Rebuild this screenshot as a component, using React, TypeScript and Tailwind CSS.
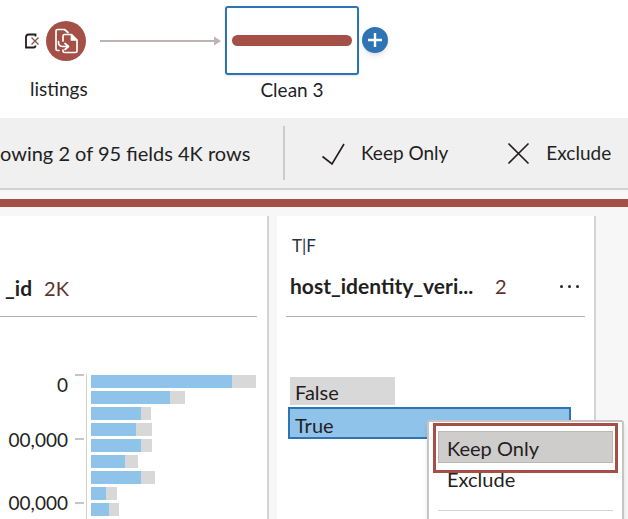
import React from "react";

type Bar = { selected: number; total: number };

const bars: Bar[] = [
  { selected: 141, total: 165 },
  { selected: 79, total: 94 },
  { selected: 50, total: 60 },
  { selected: 45, total: 61 },
  { selected: 50, total: 61 },
  { selected: 34, total: 47 },
  { selected: 50, total: 64 },
  { selected: 15, total: 26 },
  { selected: 18, total: 28 },
];

const axisLabels = ["0", "00,000", "00,000"];

function InputIcon() {
  return (
    <svg viewBox="0 0 16 16" className="h-4 w-4" fill="none" stroke="#241c1c" strokeWidth="1.8" aria-hidden="true">
      <path d="M11.500 3.500V1.500H4.500C2.500 1.500 2 2.500 2 4.500V14.500H9.500C10.500 14.500 11.500 13.500 11.500 12.500" />
      <path d="M7.500 4.500L14.500 11.500M14.500 4.500L7.500 11.500" stroke="#85504c" strokeWidth="1.3" />
    </svg>
  );
}

function ListingsIcon() {
  return (
    <svg viewBox="0 0 40 40" className="h-10 w-10" fill="none" aria-hidden="true">
      <circle cx="20" cy="20" r="20" fill="#a45047" />
      <g stroke="#fff" strokeWidth="1.7" strokeLinejoin="round" strokeLinecap="round">
        <path d="M13 29.500H11.500Q10 29.500 10 28V10Q10 8.500 11.500 8.500H18.500L22 11.500" />
        <path d="M17 20V15Q17 13.500 18.500 13.500H25.500L31 19V30Q31 31.500 29.500 31.500H18.500Q17 31.500 17 30V29" />
        <path d="M25.500 14V19H30.500" fill="#fff" />
        <path d="M12.500 20.500Q12 25.500 17 25.500H22M19 22.500L22.500 25.500L19 28.500" />
      </g>
    </svg>
  );
}

function FlowPane() {
  return (
    <section aria-label="Flow" className="flex h-[118px] min-w-0 items-start">
      <div className="flex w-[100px] shrink-0 flex-col pt-[21px]">
        <div className="flex items-center gap-[6px] pl-6">
          <InputIcon />
          <ListingsIcon />
        </div>
        <span className="mt-4 pl-[30px] text-[19px] leading-6">listings</span>
      </div>
      <div className="mt-9 mr-1 flex w-[121px] items-center">
        <div className="h-[2px] flex-1 bg-[#bdb3b3]" />
        <svg viewBox="0 0 7 10" className="h-[10px] w-[7px]" aria-hidden="true">
          <path d="M0 0.500L7 5L0 9.500Z" fill="#bdb3b3" />
        </svg>
      </div>
      <div className="flex w-[134px] shrink-0 flex-col items-center pt-[6px]">
        <div className="flex h-[69px] w-full items-center rounded-[3px] border-2 border-[#2e74b5] px-[5px] shadow-sm">
          <div className="h-[11px] w-full rounded-full bg-[#a45047]" />
        </div>
        <span className="mt-[3px] text-[19px] leading-6">Clean 3</span>
      </div>
      <button type="button" aria-label="Add step" className="mt-[27px] ml-[3px] flex size-[26px] shrink-0 items-center justify-center rounded-full bg-[#2e74b5] shadow-md">
        <svg viewBox="0 0 16 16" className="size-4" stroke="#fff" strokeWidth="2.4" aria-hidden="true">
          <path d="M8 1V15M1 8H15" />
        </svg>
      </button>
    </section>
  );
}

function Toolbar() {
  return (
    <section aria-label="Profile toolbar" className="flex h-[72px] shrink-0 items-center border-b-2 border-[#d2d2d2] bg-[#f0f0f0] text-[19px]">
      <span className="w-[283px] shrink-0 text-[20px] whitespace-nowrap">owing 2 of 95 fields 4K rows</span>
      <div className="h-[54px] w-[2px] bg-[#cccccc]" />
      <button type="button" className="ml-9 flex items-center gap-4 whitespace-nowrap">
        <svg viewBox="0 0 24 24" className="h-6 w-6" fill="none" stroke="#241c1c" strokeWidth="1.6" aria-hidden="true">
          <path d="M1.500 15.500L11 23L23 3" />
        </svg>
        Keep Only
      </button>
      <button type="button" className="ml-[58px] flex items-center gap-4 whitespace-nowrap">
        <svg viewBox="0 0 24 24" className="h-6 w-6" fill="none" stroke="#241c1c" strokeWidth="1.6" aria-hidden="true">
          <path d="M2.500 2.500L22.500 22.500M22.500 2.500L2.500 22.500" />
        </svg>
        Exclude
      </button>
    </section>
  );
}

function IdCard() {
  return (
    <article className="min-w-0 border-r-2 border-[#d4d4d4] bg-white">
      <header className="mr-[10px] flex h-[101px] items-end gap-3 border-b border-[#b8b0b0] pb-4 pl-[5px] text-[20px] leading-6">
        <h2 className="text-[21px] font-bold">_id</h2>
        <span className="text-[#5c3330]">2K</span>
      </header>
      <div className="flex items-start pt-12">
        <div className="flex w-[68px] shrink-0 flex-col gap-[39px] text-right text-[19px] leading-6">
          {axisLabels.map((label, i) => (
            <span key={i} className="h-6 first:pt-2">{label}</span>
          ))}
        </div>
        <div className="mt-[9px] ml-[7px] flex w-[11px] flex-col gap-[62px]">
          {axisLabels.map((_, i) => (
            <i key={i} className="h-[2px] w-[9px] bg-[#c9c4c4]" />
          ))}
        </div>
        <div className="mt-[9px] flex flex-col gap-[3px] border-l border-[#d2d2d2] pt-px pb-4 pl-1">
          {bars.map((bar, i) => (
            <div key={i} className="h-[13px] bg-[#d8d8d8]" style={{ width: bar.total }}>
              <div className="h-full bg-[#8fc3e9]" style={{ width: bar.selected }} />
            </div>
          ))}
        </div>
      </div>
    </article>
  );
}

function ContextMenu() {
  return (
    <div role="menu" className="absolute top-[13px] left-[139px] z-10 h-[160px] w-[197px] rounded-[3px] border-2 border-[#c9c4c4] bg-white px-[9px] pt-[9px] shadow-md">
      <button type="button" role="menuitem" className="block h-8 w-full border border-[#bcb6b6] bg-[#cfcccc] pl-2 text-left text-[20px] leading-8">
        Keep Only
      </button>
      <button type="button" role="menuitem" className="block h-8 w-full pl-[9px] text-left text-[20px] leading-8">
        Exclude
      </button>
      <hr className="mt-[15px] border-[#d4d4d4]" />
      <div className="pointer-events-none absolute inset-x-1 top-px h-[50px] border-[3px] border-[#a45047]" />
    </div>
  );
}

function VerifiedCard() {
  return (
    <article className="min-w-0 border-r-2 border-[#d4d4d4] bg-white pr-[9px] pl-[9px]">
      <header className="flex h-[101px] flex-col border-b border-[#b8b0b0] pt-[18px] text-[20px]">
        <span className="pl-[6px] text-[17px] leading-6 text-[#223344]">T|F</span>
        <div className="mt-4 flex items-center pl-1 leading-6">
          <h2 className="w-[205px] shrink-0 text-[21px] font-bold">host_identity_veri...</h2>
          <span className="text-[#5c3330]">2</span>
          <button type="button" aria-label="More options" className="mr-[6px] ml-auto flex h-6 items-center gap-[5px]">
            <i className="size-[3px] rounded-full bg-[#332222]" />
            <i className="size-[3px] rounded-full bg-[#332222]" />
            <i className="size-[3px] rounded-full bg-[#332222]" />
          </button>
        </div>
      </header>
      <div className="pt-[60px] pl-[2px] text-[20px]">
        <button type="button" className="ml-[2px] block h-7 w-[105px] bg-[#d8d8d8] pl-[5px] text-left leading-[30px]">
          False
        </button>
        <div className="relative mt-[2px] w-[283px]">
          <button type="button" className="block h-8 w-full border-2 border-[#2e74b5] bg-[#8fc3e9] pl-[5px] text-left leading-8">
            True
          </button>
          <ContextMenu />
        </div>
      </div>
    </article>
  );
}

export default function App() {
  return (
    <main className="flex h-screen flex-col overflow-hidden bg-[#f7f7f7] font-['Lato',sans-serif] text-[#241f1f]">
      <div className="shrink-0 bg-white">
        <FlowPane />
      </div>
      <Toolbar />
      <div className="mt-[9px] h-2 shrink-0 bg-[#a45047]" />
      <div className="mt-[9px] grid min-h-0 flex-1 grid-cols-[269fr_319fr] gap-2 pr-8">
        <IdCard />
        <VerifiedCard />
      </div>
    </main>
  );
}
